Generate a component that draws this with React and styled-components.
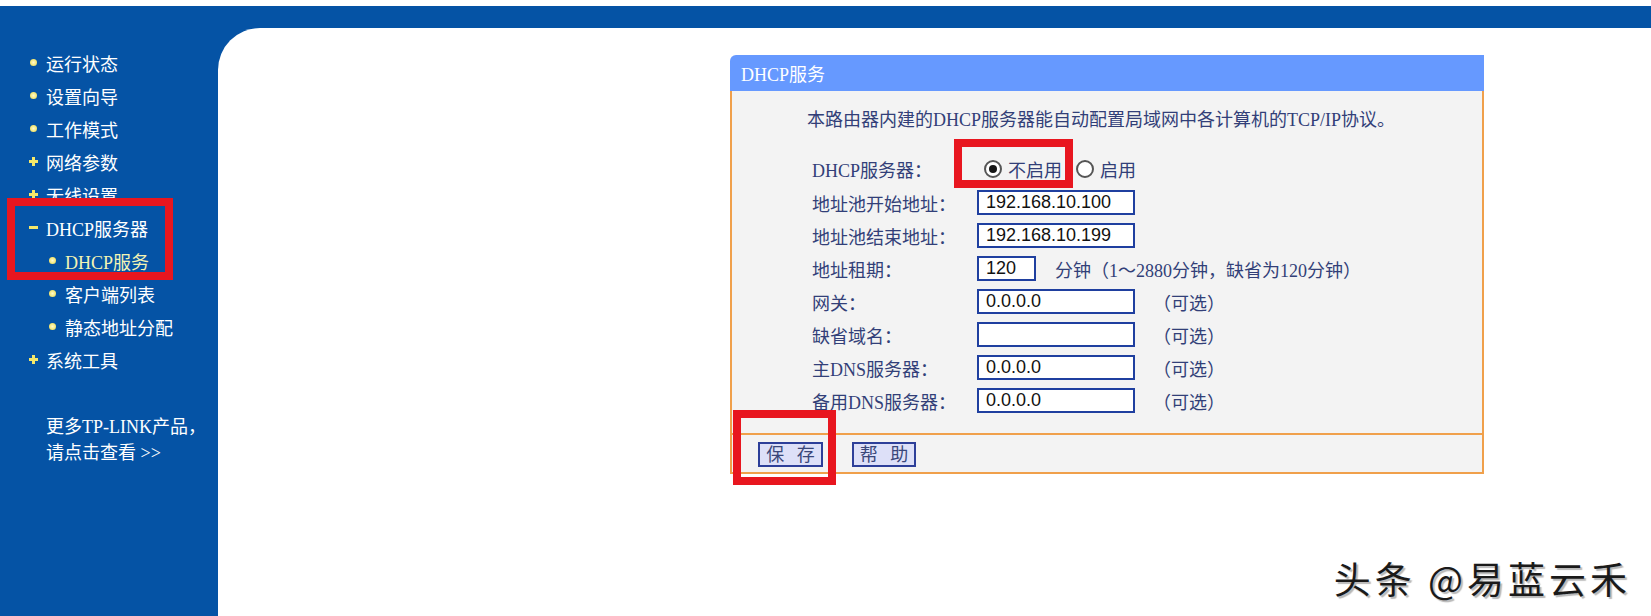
import React from "react";
import styled, { createGlobalStyle } from "styled-components";

const GlobalStyle = createGlobalStyle`
  body {
    margin: 0;
    background: #ffffff;
    font-family: "Liberation Serif", "Noto Sans CJK SC", serif;
  }
`;

const Page = styled.div`
  position: relative;
  width: 1651px;
  height: 616px;
  padding-top: 6px;
  box-sizing: border-box;
  overflow: hidden;
`;

const Frame = styled.div`
  display: flex;
  height: 610px;
  background: #0553a5;
`;

const Sidebar = styled.div`
  position: relative;
  width: 218px;
  padding-top: 40px;
  box-sizing: border-box;
  flex-shrink: 0;
`;

const MenuItem = styled.div`
  display: flex;
  align-items: center;
  height: 33px;
  padding-left: ${(p) => (p.$sub ? "48px" : "29px")};
  font-size: 18px;
  color: ${(p) => (p.$active ? "#f4f4b4" : "#ffffff")};
  gap: 8px;
`;

const IconBox = styled.span`
  position: relative;
  display: inline-block;
  width: 9px;
  height: 9px;
  flex-shrink: 0;
`;

const Dot = styled.span`
  position: absolute;
  left: 1px;
  top: 1px;
  width: 7px;
  height: 7px;
  border-radius: 50%;
  background: radial-gradient(circle, #fffbd0 0%, #f2e36a 70%);
`;

const Bar = styled.span`
  position: absolute;
  background: #f5e86a;
  ${(p) =>
    p.$vertical
      ? "left: 3px; top: 0; width: 3px; height: 9px;"
      : "left: 0; top: 3px; width: 9px; height: 3px;"}
`;

const Promo = styled.div`
  margin-top: 38px;
  padding-left: 46px;
  font-size: 18px;
  line-height: 26px;
  color: #ffffff;
`;

const Mark = styled.div`
  position: absolute;
  border: 8px solid #e8161f;
  box-sizing: border-box;
  pointer-events: none;
  z-index: 2;
`;

const Content = styled.div`
  flex: 1;
  margin-top: 22px;
  background: #ffffff;
  border-top-left-radius: 42px;
`;

const Panel = styled.div`
  position: relative;
  width: 754px;
  margin: 27px 0 0 512px;
`;

const PanelHead = styled.div`
  height: 36px;
  display: flex;
  align-items: center;
  padding-left: 11px;
  background: #6699ff;
  border-top-left-radius: 6px;
  color: #ffffff;
  font-size: 18px;
`;

const PanelBody = styled.div`
  background: #f3f3f3;
  border-left: 2px solid #f0a04b;
  border-right: 2px solid #f0a04b;
  padding: 17px 0 16px;
  color: #323f78;
  font-size: 18px;
`;

const Intro = styled.div`
  padding-left: 75px;
  line-height: 24px;
  margin-bottom: 19px;
`;

const Field = styled.div`
  display: flex;
  align-items: center;
  height: ${(p) => (p.$tall ? "35px" : "33px")};
  padding-left: 80px;
`;

const Label = styled.div`
  width: 165px;
  flex-shrink: 0;
`;

const TextBox = styled.div`
  width: ${(p) => p.$w || 158}px;
  height: 25px;
  box-sizing: border-box;
  border: 2px solid #1f3f9f;
  background: #ffffff;
  padding-left: 7px;
  display: flex;
  align-items: center;
  font-family: "Liberation Sans", "Noto Sans CJK SC", sans-serif;
  font-size: 18px;
  color: #111111;
`;

const Hint = styled.span`
  margin-left: ${(p) => p.$gap || 18}px;
`;

const Radio = styled.span`
  position: relative;
  width: 18px;
  height: 18px;
  box-sizing: border-box;
  border: 2px solid #555555;
  border-radius: 50%;
  background: #ffffff;
  margin-left: ${(p) => p.$gap}px;
  margin-right: 6px;

  &::after {
    content: "";
    display: ${(p) => (p.$on ? "block" : "none")};
    position: absolute;
    left: 3px;
    top: 3px;
    width: 8px;
    height: 8px;
    border-radius: 50%;
    background: #151515;
  }
`;

const PanelFoot = styled.div`
  display: flex;
  gap: 29px;
  height: 41px;
  padding: 7px 0 0 26px;
  box-sizing: border-box;
  background: #f3f3f3;
  border: 2px solid #f0a04b;
`;

const Button = styled.button`
  width: ${(p) => p.$w}px;
  height: 25px;
  padding: 0;
  border: 2px solid #2d3f99;
  background: #dde0f8;
  color: #3a477a;
  font-family: "Liberation Serif", "Noto Sans CJK SC", serif;
  font-size: 18px;
  line-height: 20px;
  word-spacing: 8px;
`;

const Watermark = styled.div`
  position: absolute;
  right: 20px;
  top: 551px;
  font-family: "Noto Sans CJK SC", sans-serif;
  font-size: 37px;
  letter-spacing: 4px;
  color: #1a1a1a;
  text-shadow: 2px 2px 1px #b8b8b8;
`;

function Icon({ kind }) {
  return (
    <IconBox>
      {kind === "dot" && <Dot />}
      {kind === "plus" && (
        <>
          <Bar />
          <Bar $vertical />
        </>
      )}
      {kind === "minus" && <Bar />}
    </IconBox>
  );
}

const menu = [
  { text: "运行状态", icon: "dot" },
  { text: "设置向导", icon: "dot" },
  { text: "工作模式", icon: "dot" },
  { text: "网络参数", icon: "plus" },
  { text: "无线设置", icon: "plus" },
  { text: "DHCP服务器", icon: "minus" },
  { text: "DHCP服务", icon: "dot", sub: true, active: true },
  { text: "客户端列表", icon: "dot", sub: true },
  { text: "静态地址分配", icon: "dot", sub: true },
  { text: "系统工具", icon: "plus" },
];

const fields = [
  { label: "地址池开始地址：", value: "192.168.10.100" },
  { label: "地址池结束地址：", value: "192.168.10.199" },
  { label: "地址租期：", value: "120", w: 59, lease: true },
  { label: "网关：", value: "0.0.0.0", opt: true },
  { label: "缺省域名：", value: "", opt: true },
  { label: "主DNS服务器：", value: "0.0.0.0", opt: true },
  { label: "备用DNS服务器：", value: "0.0.0.0", opt: true },
];

export default function App() {
  return (
    <>
      <GlobalStyle />
      <Page>
        <Frame>
          <Sidebar>
            {menu.map((m) => (
              <MenuItem key={m.text} $sub={m.sub} $active={m.active}>
                <Icon kind={m.icon} />
                {m.text}
              </MenuItem>
            ))}
            <Promo>
              更多TP-LINK产品，
              <br />
              请点击查看 &gt;&gt;
            </Promo>
            <Mark style={{ left: 7, top: 192, width: 166, height: 82 }} />
          </Sidebar>
          <Content>
            <Panel>
              <PanelHead>DHCP服务</PanelHead>
              <PanelBody>
                <Intro>本路由器内建的DHCP服务器能自动配置局域网中各计算机的TCP/IP协议。</Intro>
                <Field $tall>
                  <Label>DHCP服务器：</Label>
                  <Radio $on $gap={7} />
                  不启用
                  <Radio $gap={14} />
                  启用
                </Field>
                {fields.map((f) => (
                  <Field key={f.label}>
                    <Label>{f.label}</Label>
                    <TextBox $w={f.w}>{f.value}</TextBox>
                    {f.lease && (
                      <Hint $gap={19}>分钟（1～2880分钟，缺省为120分钟）</Hint>
                    )}
                    {f.opt && <Hint>（可选）</Hint>}
                  </Field>
                ))}
              </PanelBody>
              <PanelFoot>
                <Button $w={65}>保 存</Button>
                <Button $w={64}>帮 助</Button>
              </PanelFoot>
              <Mark style={{ left: 224, top: 84, width: 119, height: 49 }} />
              <Mark style={{ left: 3, top: 355, width: 103, height: 75 }} />
            </Panel>
          </Content>
        </Frame>
        <Watermark>头条 @易蓝云禾</Watermark>
      </Page>
    </>
  );
}
